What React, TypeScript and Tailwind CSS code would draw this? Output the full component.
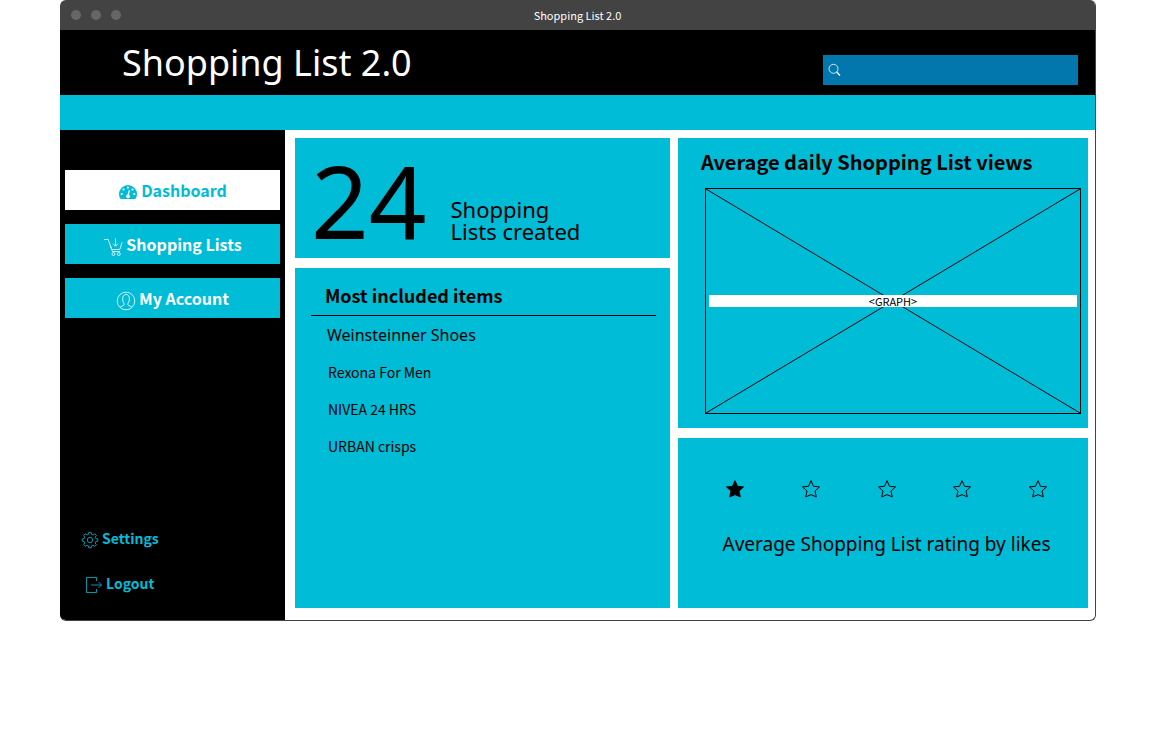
import React from "react";

const iconBase = "shrink-0 fill-none stroke-current";

function GaugeIcon() {
  return (
    <svg viewBox="0 0 20 16" className="mt-[3px] h-4 w-5 shrink-0">
      <path
        fill="currentColor"
        d="M10 1A9 9 0 0 0 1 10c0 1.700.4 3.200 1.200 4.600.2.300.5.400.8.400h14c.3 0 .6-.1.8-.4.8-1.400 1.200-2.900 1.200-4.600a9 9 0 0 0-9-9Z"
      />
      <g fill="white">
        <circle cx="10" cy="3.600" r="1.100" />
        <circle cx="5.500" cy="5.500" r="1.100" />
        <circle cx="3.700" cy="10" r="1.100" />
        <circle cx="14.500" cy="5.500" r="1.100" />
        <circle cx="16.300" cy="10" r="1.100" />
        <circle cx="10" cy="12.300" r="1.900" />
        <path d="m9.300 11.500 1.500-5.500 1.100.3-1.100 5.500Z" />
      </g>
    </svg>
  );
}

function CartIcon() {
  return (
    <svg viewBox="0 0 20 20" strokeWidth="0.8" className={`mt-[5px] size-5 ${iconBase}`}>
      <path d="M1 2.500h4.200l4.300 12h7.300M7.300 8.500l1.500 4h8l2.200-7M12.500 1.500v7.500M10 6.700l2.500 2.500L15 6.700" />
      <circle cx="10.500" cy="17" r="1.500" />
      <circle cx="15.800" cy="17" r="1.500" />
    </svg>
  );
}

function AccountIcon() {
  return (
    <svg viewBox="0 0 20 20" strokeWidth="0.8" className={`mt-[5px] size-5 ${iconBase}`}>
      <circle cx="10" cy="10" r="8.800" />
      <path d="M4 16.300c.8-1 2.500-1.200 3.700-1.900.7-.5.500-1.600.2-2.200C7 11 6.600 9.500 6.600 7.800c0-2.600 1.300-4.300 3.400-4.300s3.400 1.700 3.400 4.300c0 1.700-.4 3.200-1.300 4.300-.3.600-.5 1.700.2 2.200 1.200.7 2.900.9 3.700 1.900" />
    </svg>
  );
}

function GearIcon() {
  return (
    <svg viewBox="0 0 18 18" strokeWidth="0.8" className={`mt-[3px] size-[18px] ${iconBase}`}>
      <circle cx="9" cy="9" r="2.700" />
      <path d="M7.800 1.300h2.400l.4 2.100 1.400.6 1.800-1.200 1.600 1.600-1.200 1.800.6 1.400 2 .4v2.200l-2 .4-.6 1.400 1.200 1.800-1.600 1.600-1.800-1.200-1.400.6-.4 2H7.800l-.4-2-1.400-.6-1.800 1.200-1.600-1.600L3.800 12l-.6-1.400-2-.4V8l2-.4.6-1.400-1.200-1.800 1.600-1.600L6 4l1.400-.6Z" />
    </svg>
  );
}

function LogoutIcon() {
  return (
    <svg viewBox="0 0 18 18" strokeWidth="0.8" className={`mt-[3px] size-[18px] ${iconBase}`}>
      <path d="M11.500 5V1.500h-10v15h10V13M6 9h10.500M13.500 6l3 3-3 3" />
    </svg>
  );
}

function SearchIcon() {
  return (
    <svg viewBox="0 0 14 14" className={`size-[14px] ${iconBase}`}>
      <circle cx="5.500" cy="5.800" r="4.500" strokeWidth="0.8" />
      <path d="m8.700 9 3.300 3.500" strokeWidth="1.400" />
    </svg>
  );
}

function Star({ filled }: { filled: boolean }) {
  return (
    <svg viewBox="0 0 20 20" className="size-5 stroke-black" fill={filled ? "black" : "none"}>
      <path d="m10 1.700 2.500 5.600 6 .6-4.500 4.100 1.300 6L10 15.600 4.700 18 6 12 1.500 7.900l6-.6Z" />
    </svg>
  );
}

const nav = [
  { label: "Dashboard", icon: <GaugeIcon />, active: true },
  { label: "Shopping Lists", icon: <CartIcon />, active: false },
  { label: "My Account", icon: <AccountIcon />, active: false },
];

const items = ["Rexona For Men", "NIVEA 24 HRS", "URBAN crisps"];

export default function App() {
  return (
    <div className="mr-[59px] ml-[60px] overflow-hidden rounded-md border-r border-b border-[#434343] bg-white font-['Noto_Sans_CJK_SC','Noto_Sans',sans-serif] text-black">
      <div className="grid h-[30px] grid-cols-[1fr_auto_1fr] items-center bg-[#434343] px-[11px]">
        <div className="flex gap-[10px]">
          <span className="size-[10px] rounded-full bg-[#666]" />
          <span className="size-[10px] rounded-full bg-[#666]" />
          <span className="size-[10px] rounded-full bg-[#666]" />
        </div>
        <span className="text-[11px] text-white">Shopping List 2.0</span>
      </div>

      <header className="flex h-[65px] items-center justify-between bg-black pr-[17px] pl-[62px]">
        <h1 className="font-['Noto_Sans',sans-serif] text-[36px] leading-[65px] text-white">Shopping List 2.0</h1>
        <label className="mt-[15px] flex h-[30px] w-[255px] items-center bg-[#0277ad] pl-[5px] text-white">
          <SearchIcon />
          <input type="search" aria-label="Search" className="min-w-0 flex-1 bg-transparent px-2 text-sm outline-none" />
        </label>
      </header>
      <div className="h-[35px] bg-[#00bcd7]" />

      <div className="flex">
        <aside className="flex w-[225px] shrink-0 flex-col justify-between bg-black px-[5px] pt-10 pb-[25px]">
          <nav className="flex flex-col gap-[14px]">
            {nav.map((n) => (
              <a
                key={n.label}
                href="#"
                aria-current={n.active ? "page" : undefined}
                className={`flex h-10 items-center justify-center gap-[3px] text-[16px] font-bold ${
                  n.active ? "bg-white text-[#00bcd7]" : "bg-[#00bcd7] text-white"
                }`}
              >
                {n.icon}
                {n.label}
              </a>
            ))}
          </nav>
          <div className="flex flex-col gap-[21px] pl-4 text-[14px] leading-6 font-bold text-[#00bcd7]">
            <a href="#" className="flex items-center gap-[3px]">
              <GearIcon />
              Settings
            </a>
            <a href="#" className="flex items-center gap-[3px] pl-1">
              <LogoutIcon />
              Logout
            </a>
          </div>
        </aside>

        <main className="grid flex-1 grid-cols-[375fr_410fr] gap-2 pt-2 pr-[7px] pb-3 pl-[10px]">
          <div className="flex flex-col gap-[10px]">
            <section className="flex h-[120px] items-end bg-[#00bcd7] pb-4 pl-4">
              <span className="pb-[2px] font-['Noto_Sans',sans-serif] text-[101px] leading-[80px]">24</span>
              <p className="pl-[24px] font-['Noto_Sans',sans-serif] text-[22px] leading-[22px]">
                Shopping
                <br />
                Lists created
              </p>
            </section>
            <section className="flex-1 bg-[#00bcd7] pt-3 pr-[14px] pl-4">
              <h2 className="border-b border-black px-[14px] pb-1 text-[18px] leading-[31px] font-bold">
                Most included items
              </h2>
              <ul className="px-4 pt-px text-[14px] leading-[37px]">
                <li className="font-['Noto_Sans',sans-serif] text-[16px]">Weinsteinner Shoes</li>
                {items.map((i) => (
                  <li key={i} className="pl-px">
                    {i}
                  </li>
                ))}
              </ul>
            </section>
          </div>

          <div className="flex flex-col gap-[10px]">
            <section className="flex h-[290px] flex-col bg-[#00bcd7] pt-2 pr-[7px] pb-[14px] pl-[23px]">
              <h2 className="text-[20px] leading-[32px] font-bold">Average daily Shopping List views</h2>
              <div className="mt-[10px] ml-1 grid flex-1 border border-black">
                <svg
                  viewBox="0 0 374 224"
                  preserveAspectRatio="none"
                  className="col-start-1 row-start-1 size-full stroke-black"
                >
                  <path d="M0 0 374 224M374 0 0 224" />
                </svg>
                <span className="z-10 col-start-1 row-start-1 mx-[3px] self-center bg-white text-center text-[11px] leading-3">
                  &lt;GRAPH&gt;
                </span>
              </div>
            </section>
            <section className="flex h-[170px] flex-col bg-[#00bcd7] pt-[41px] pr-[33px] pl-10">
              <div className="flex justify-between px-[7px]" role="img" aria-label="1 out of 5 stars">
                {[1, 2, 3, 4, 5].map((n) => (
                  <Star key={n} filled={n <= 1} />
                ))}
              </div>
              <p className="pt-[30px] text-center font-['Noto_Sans',sans-serif] text-[19px] leading-[30px]">
                Average Shopping List rating by likes
              </p>
            </section>
          </div>
        </main>
      </div>
    </div>
  );
}
